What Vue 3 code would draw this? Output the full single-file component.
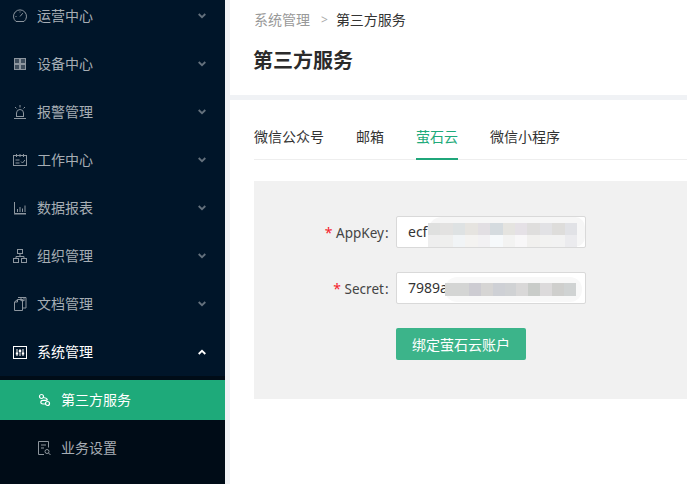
<script setup>
const menus = [
  { name: '运营中心', icon: 'gauge' },
  { name: '设备中心', icon: 'grid' },
  { name: '报警管理', icon: 'alarm' },
  { name: '工作中心', icon: 'calendar' },
  { name: '数据报表', icon: 'chart' },
  { name: '组织管理', icon: 'org' },
  { name: '文档管理', icon: 'docs' },
]
const tabs = ['微信公众号', '邮箱', '萤石云', '微信小程序']
const keyTop = ['#dfe0df', '#e3e2e1', '#dee2e3', '#e6e4e0', '#e2dfe3', '#d5dbdf', '#e5e4e0', '#e5e1e6', '#dfdedd', '#e2e2e5', '#dedddb', '#e1e2e6']
const keyBottom = ['#eeeeee', '#efefee', '#f1f4f6', '#f4f3f1', '#f2f1f3', '#f6f9fb', '#f3f3f2', '#f8f7f8', '#f1f0ee', '#f2f2f1', '#f2f2f2', '#ebebee']
const secretTiles = ['#d4d5d4', '#d4d5d4', '#cdccd2', '#d6d5d4', '#ced0d5', '#d0d2d4', '#d9d8d8', '#c9ccc9', '#dcdadb', '#cfcfcd', '#d0d3d3']
</script>

<template>
  <div class="page">
    <aside class="sidebar">
      <div v-for="m in menus" :key="m.name" class="menu-row">
        <svg class="icon" viewBox="0 0 16 16" fill="none" stroke="currentColor">
          <template v-if="m.icon === 'gauge'">
            <path d="M4 13.500h8a6.500 6.500 0 1 0-8 0z" />
            <path d="M8 8.500l2.800-3.300M3.500 8.500h1M8 3.500v1" />
          </template>
          <template v-else-if="m.icon === 'grid'">
            <g fill="currentColor" fill-opacity=".45">
              <rect x="2.500" y="2.500" width="5" height="5" />
              <rect x="8.500" y="2.500" width="5" height="5" />
              <rect x="2.500" y="8.500" width="5" height="5" />
              <rect x="8.500" y="8.500" width="5" height="5" />
            </g>
          </template>
          <template v-else-if="m.icon === 'alarm'">
            <path d="M4.500 13V9a3.500 3.500 0 0 1 7 0v4M2 14.500h12M8 1v2.500M3 3l1.500 1.500M13 3l-1.500 1.500" />
            <path d="M4.500 12.500h7" />
          </template>
          <template v-else-if="m.icon === 'calendar'">
            <rect x="1.500" y="3.500" width="13" height="10" />
            <path d="M4.500 2v3M8 2v3M11.500 2v3M3.500 8h4M3.500 11h4M9 9.500l1.500 1.500L13 8" />
          </template>
          <template v-else-if="m.icon === 'chart'">
            <path d="M2.500 2v11.500H14" />
            <path d="M2 14h12" />
            <path d="M5.500 12V9M8 12V7M10.500 12V8.500M13 12V5.500" />
          </template>
          <template v-else-if="m.icon === 'org'">
            <rect x="5.500" y="1.500" width="5" height="4" />
            <rect x="1.500" y="10.500" width="5" height="4" />
            <rect x="9.500" y="10.500" width="5" height="4" />
            <path d="M8 5.500V8M4 10.500V8.500h8v2" />
          </template>
          <template v-else>
            <path d="M2.500 6l3-2.500h5v11h-8zM5.500 3.500V6h-3" />
            <path d="M6 1.500h8v10.500h-3.500M9 1.500V5l1.500-1L12 5V1.500" />
          </template>
        </svg>
        <span class="menu-label">{{ m.name }}</span>
        <svg class="chev" viewBox="0 0 8 6" fill="none" stroke="currentColor" stroke-width="1.800">
          <path d="M.7 1L4 4.200 7.300 1" />
        </svg>
      </div>

      <div class="menu-row open">
        <svg class="icon" viewBox="0 0 16 16" fill="none" stroke="currentColor">
          <rect x="1.500" y="2.500" width="13" height="12" />
          <path d="M5 5v7M8 5v7M11 5v7" />
          <path d="M3.800 9.500h2.400M6.800 7h2.400M9.800 9.500h2.400" stroke-width="1.800" />
        </svg>
        <span class="menu-label">系统管理</span>
        <svg class="chev" viewBox="0 0 8 6" fill="none" stroke="currentColor" stroke-width="1.800">
          <path d="M.7 5L4 1.800 7.300 5" />
        </svg>
      </div>

      <div class="submenu">
        <div class="sub-row active">
          <svg class="icon" viewBox="0 0 16 16" fill="none" stroke="currentColor" stroke-width="1.200">
            <circle cx="4.500" cy="4.500" r="2" />
            <circle cx="10.500" cy="11.500" r="2" />
            <path d="M6.300 5.500C11 6.300 11 8.300 9 8.300H6C3.300 8.300 3 12 6 12h2.500" />
          </svg>
          <span>第三方服务</span>
        </div>
        <div class="sub-row">
          <svg class="icon" viewBox="0 0 16 16" fill="none" stroke="currentColor">
            <path d="M7 14.500H1.500v-13h10v6" />
            <path d="M4 5h5M4 8h3" />
            <circle cx="10" cy="11.500" r="2" />
            <path d="M11.500 13l2 2" />
          </svg>
          <span>业务设置</span>
        </div>
      </div>
    </aside>

    <main class="main">
      <header class="head">
        <div class="crumbs">
          <span class="crumb-parent">系统管理</span>
          <span class="crumb-sep">&gt;</span>
          <span class="crumb-current">第三方服务</span>
        </div>
        <h1 class="title">第三方服务</h1>
      </header>

      <section class="content">
        <nav class="tabs">
          <div v-for="t in tabs" :key="t" class="tab" :class="{ 'tab-on': t === '萤石云' }">{{ t }}</div>
        </nav>

        <div class="panel">
          <div class="field">
            <label class="label"><i>*</i> AppKey<b>:</b></label>
            <div class="input">
              ecf
              <div class="blur blur-key">
                <div class="tile-col">
                  <div class="tile-row">
                    <span v-for="(c, i) in keyTop" :key="i" class="tile" :style="{ background: c }"></span>
                  </div>
                  <div class="tile-row">
                    <span v-for="(c, i) in keyBottom" :key="i" class="tile" :style="{ background: c }"></span>
                  </div>
                </div>
              </div>
            </div>
          </div>
          <div class="field">
            <label class="label"><i>*</i> Secret<b>:</b></label>
            <div class="input">
              7989a
              <div class="blur blur-secret">
                <div class="tile-row">
                  <span v-for="(c, i) in secretTiles" :key="i" class="tile" :style="{ background: c }"></span>
                </div>
              </div>
            </div>
          </div>
          <div class="actions">
            <button class="btn" type="button">绑定萤石云账户</button>
          </div>
        </div>
      </section>
    </main>
  </div>
</template>

<style>
html, body { margin: 0; overflow: hidden; }
</style>

<style scoped>
.page {
  display: flex;
  width: 687px;
  height: 484px;
  overflow: hidden;
  font-family: "Noto Sans", "Noto Sans CJK SC", sans-serif;
  font-size: 14px;
  background: #fff;
}
.sidebar {
  flex: 0 0 225px;
  height: 484px;
  overflow: hidden;
  background: #001529;
  color: #a6adb4;
}
.menu-row {
  display: flex;
  align-items: center;
  height: 48px;
  padding: 0 19px 0 12px;
}
.menu-row:first-child { margin-top: -8px; }
.icon {
  flex: none;
  width: 16px;
  height: 16px;
  margin-right: 9px;
  opacity: .85;
}
.menu-label { flex: 1; line-height: 1; }
.chev {
  flex: none;
  width: 8px;
  height: 6px;
  margin-top: -1px;
  opacity: .6;
}
.open { color: #fff; }
.open .icon, .open .chev { opacity: 1; }
.open .chev { margin-top: 0; }
.submenu {
  height: 108px;
  padding-top: 4px;
  box-sizing: border-box;
  background: #000c17;
}
.sub-row {
  display: flex;
  align-items: center;
  height: 40px;
  margin-bottom: 8px;
  padding-left: 37px;
  line-height: 1;
}
.sub-row .icon { margin-right: 8px; }
.active { background: #1eaa7a; color: #fff; }
.active .icon { opacity: 1; }
.main {
  flex: 1;
  min-width: 0;
  border-left: 5px solid #f0f2f5;
  color: #333;
}
.head {
  height: 95px;
  box-sizing: border-box;
  padding: 11px 24px 0;
}
.crumbs {
  display: flex;
  align-items: center;
  height: 18px;
  line-height: 18px;
}
.crumb-parent { color: #999; }
.crumb-sep { margin: 0 8px 0 11px; color: #aaa; font-size: 12px; }
.crumb-current { color: #333; }
.title {
  margin: 18px 0 0 -1px;
  font-size: 20px;
  line-height: 28px;
  font-weight: 700;
  color: #2b2b2b;
}
.content {
  border-top: 5px solid #f0f2f5;
  padding-left: 24px;
}
.tabs {
  display: flex;
  gap: 32px;
  height: 60px;
  box-sizing: border-box;
  border-bottom: 1px solid #eee;
}
.tab {
  height: 60px;
  box-sizing: border-box;
  padding-top: 27px;
  line-height: 20px;
  color: #333;
}
.tab-on {
  color: #1eaa7a;
  border-bottom: 2px solid #1fa67a;
}
.panel {
  height: 218px;
  margin-top: 21px;
  box-sizing: border-box;
  padding-top: 35px;
  background: #f1f1f1;
}
.field {
  display: flex;
  align-items: center;
  margin-bottom: 24px;
}
.label {
  width: 142px;
  box-sizing: border-box;
  padding-right: 7.500px;
  text-align: right;
  font-size: 13.500px;
  color: #444;
  white-space: nowrap;
}
.label i { font-style: normal; color: #f5222d; font-size: 14px; }
.label b { margin-left: 1px; font-weight: 400; }
.input {
  position: relative;
  width: 190px;
  height: 32px;
  box-sizing: border-box;
  border: 1px solid #d9d9d9;
  border-radius: 2px;
  padding-left: 11px;
  background: #fff;
  line-height: 30px;
  color: #333;
  overflow: hidden;
}
.blur {
  position: absolute;
  display: flex;
}
.blur-key {
  left: 31px;
  top: 0;
  right: 0;
  bottom: 0;
  border-radius: 14px 10px 10px 14px;
  background: #f6f6f6;
}
.blur-secret {
  left: 48px;
  top: 4px;
  right: 3px;
  height: 25px;
  border-radius: 12px;
  background: #f8f8f8;
  align-items: center;
}
.tile-col { width: 149px; margin-top: 6px; }
.tile-row { display: flex; }
.blur-key .tile-row { height: 12px; }
.blur-secret .tile-row { height: 13px; width: 131px; }
.tile { flex: 1; }
.actions { padding-left: 142px; margin-top: 24px; }
.btn {
  display: block;
  width: 130px;
  height: 32px;
  border: 0;
  border-radius: 2px;
  background: #3cb48a;
  color: #fff;
  font: inherit;
  padding: 0;
}
</style>
